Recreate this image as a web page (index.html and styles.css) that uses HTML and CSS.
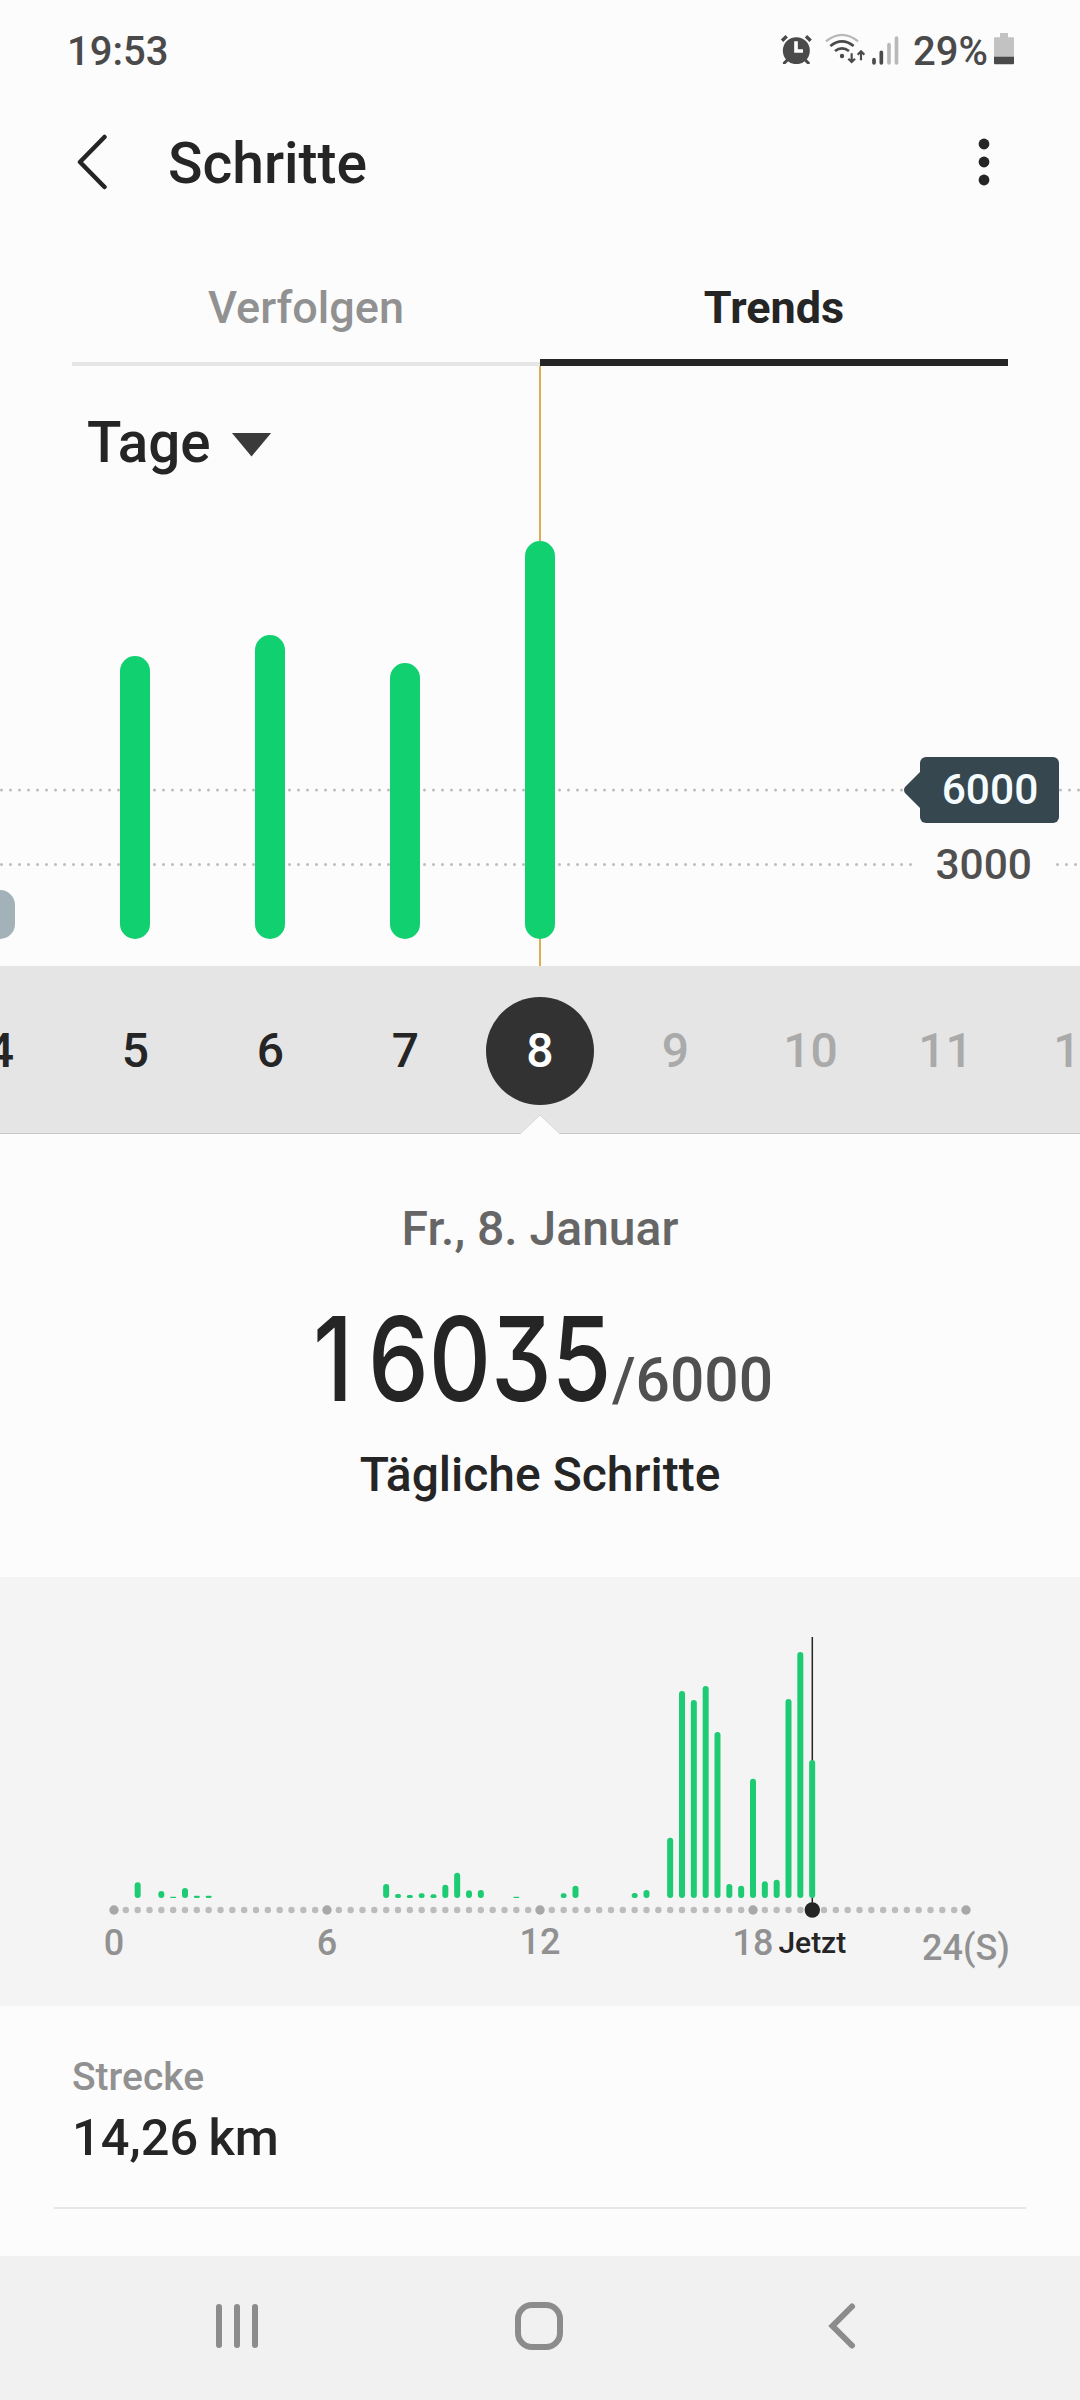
FILE: index.html
```html
<!DOCTYPE html>
<html lang="de">
<head>
    <meta charset="UTF-8">
    <meta name="viewport" content="width=device-width, initial-scale=1.0">
    <title>Schritte</title>
    <link rel="stylesheet" href="styles.css">
</head>
<body>
    <div class="status-bar">
        <span class="time">19:53</span>
        <div class="status-icons">
            <svg class="icon-alarm" viewBox="0 0 99 92">
                <circle cx="49" cy="50" r="40.500"/>
                <path d="M6 20 20 7M92 20 78 7" stroke-width="10.500"/>
                <path d="M13 87 24 76M85 87 74 76" stroke-width="9" stroke-linecap="round"/>
                <path class="hands" d="M48 22V51H69" stroke-width="11"/>
            </svg>
            <svg class="icon-wifi" viewBox="0 0 122 94">
                <path class="faint" d="M3 25Q51 -14 99 25" stroke-width="7"/>
                <path d="M16 39Q51 11 86 39" stroke-width="8"/>
                <path d="M30 54Q51 38 72 54" stroke-width="8"/>
                <circle cx="51" cy="69" r="6.500"/>
                <path d="M80 61V87M70 77 80 87 90 77M108 82V55M98 65 108 55 118 65" stroke-width="6.500"/>
            </svg>
            <svg class="icon-signal" viewBox="0 0 80 87">
                <path d="M6 71V81M28 49V81" stroke-width="11" stroke-linecap="round"/>
                <path class="faint" d="M51 26V81M73.500 6V81" stroke-width="11" stroke-linecap="round"/>
            </svg>
            <span class="percent">29%</span>
            <svg class="icon-battery" viewBox="0 0 60 94">
                <path class="shell" d="M18 0H42V13H57Q60 13 60 16V72H0V16Q0 13 3 13H18Z"/>
                <path d="M0 71H60V91Q60 94 57 94H3Q0 94 0 91Z"/>
            </svg>
        </div>
    </div>

    <header class="app-bar">
        <svg class="back" viewBox="0 0 32 56"><path d="M28.500 3 4 28 28.500 53"/></svg>
        <h1>Schritte</h1>
        <svg class="more" viewBox="0 0 12 48">
            <circle cx="6" cy="6" r="5.400"/>
            <circle cx="6" cy="24" r="5.400"/>
            <circle cx="6" cy="42" r="5.400"/>
        </svg>
    </header>

    <nav class="tabs">
        <div class="tab">Verfolgen</div>
        <div class="tab active">Trends</div>
    </nav>

    <section class="trend">
        <svg class="grid" viewBox="0 0 1080 600">
            <path d="M1.500 424H904M1060.500 424H1080M1.500 498.500H911M1057.500 498.500H1080"/>
        </svg>
        <div class="marker"></div>
        <div class="period">Tage <span class="caret"></span></div>
        <div class="bars">
            <div class="day"><div class="bar missed" style="height: 49px"></div></div>
            <div class="day"><div class="bar" style="height: 283px"></div></div>
            <div class="day"><div class="bar" style="height: 304px"></div></div>
            <div class="day"><div class="bar" style="height: 276px"></div></div>
            <div class="day"><div class="bar" style="height: 398px"></div></div>
        </div>
        <div class="goal">
            <svg viewBox="0 0 18 40"><path d="M18 1 2 17Q0 20 2 23L18 39Z"/></svg>
            <span>6000</span>
        </div>
        <div class="scale">3000</div>
    </section>

    <div class="dates">
        <div class="day">4</div>
        <div class="day">5</div>
        <div class="day">6</div>
        <div class="day">7</div>
        <div class="day selected"><span>8</span></div>
        <div class="day future">9</div>
        <div class="day future">10</div>
        <div class="day future">11</div>
        <div class="day future">12</div>
        <svg class="notch" viewBox="0 0 40 20"><path d="M0 20 20 1 40 20"/></svg>
    </div>

    <section class="summary">
        <div class="date">Fr., 8. Januar</div>
        <div class="count"><span class="steps">16035</span><span class="target">/6000</span></div>
        <div class="caption">Tägliche Schritte</div>
    </section>

    <section class="hourly">
        <svg id="hours" viewBox="0 0 1080 429">
            <line class="now-line" x1="812.300" y1="60" x2="812.300" y2="333"/>
            <g id="hourBars"></g>
            <g id="hourDots"></g>
            <circle class="now-dot" cx="812.300" cy="333" r="7.700"/>
            <text x="114" y="377.500">0</text>
            <text x="327" y="377.500">6</text>
            <text x="540" y="377">12</text>
            <text x="753" y="377.500">18</text>
            <text class="now" x="812.300" y="376">Jetzt</text>
            <text x="966" y="383">24(S)</text>
        </svg>
    </section>

    <section class="distance">
        <div class="label">Strecke</div>
        <div class="value">14,26&#8201;km</div>
    </section>

    <footer class="nav-bar">
        <svg class="nav-icon" viewBox="0 0 60 60"><path d="M12 11V49M30 11V49M48 11V49"/></svg>
        <svg class="nav-icon" viewBox="0 0 60 60"><rect x="9" y="9" width="42" height="42" rx="14"/></svg>
        <svg class="nav-icon" viewBox="0 0 60 60"><path d="M41 10.500 21.500 30 41 49.500"/></svg>
    </footer>

    <script>
        // one slot is 20 minutes: [slot, bar height]
        const activity = [
            [2, 15.7], [4, 7], [5, 1.3], [6, 10], [7, 2.3], [8, 2.3],
            [23, 14], [24, 4], [25, 3], [26, 4.7], [27, 3.7], [28, 13.3],
            [29, 25.3], [30, 7.7], [31, 8], [34, 1.3], [38, 4.7], [39, 12.3],
            [44, 5], [45, 8], [47, 60.3], [48, 207], [49, 198], [50, 212],
            [51, 166], [52, 14], [53, 12.3], [54, 119.3], [55, 16.7],
            [56, 18.3], [57, 199], [58, 246], [59, 138]
        ];
        const slotX = slot => 114 + slot * 213 / 18;

        document.getElementById('hourBars').innerHTML = activity.map(([slot, h]) =>
            `<rect x="${slotX(slot) - 3}" y="${321 - h}" width="6" height="${h}" rx="${Math.min(3, h / 2)}"/>`
        ).join('');

        // Axis dots, a bigger one every 6 hours
        let dots = '';
        for (let i = 0; i <= 72; i++) {
            const major = i % 18 === 0;
            dots += `<circle class="${major ? 'major' : ''}" cx="${slotX(i)}" cy="333" r="${major ? 4.7 : 3.2}"/>`;
        }
        document.getElementById('hourDots').innerHTML = dots;
    </script>
</body>
</html>
```
FILE: styles.css
```css
:root {
    --bg: #fcfcfc;
    --text: #252525;
    --muted: #919191;
    --green: #10d070;
    --dark: #37474f;
}

* {
    box-sizing: border-box;
}

body {
    margin: 0;
    width: 1080px;
    height: 2400px;
    background: var(--bg);
    color: var(--text);
    font-family: Roboto, sans-serif;
    font-weight: 500;
    overflow: hidden;
}

svg {
    display: block;
    flex: none;
}

/* Status bar */
.status-bar {
    display: flex;
    justify-content: space-between;
    height: 100px;
    padding: 0 66px 0 67px;
    font-size: 40px;
    line-height: 103px;
    color: #4a4a4a;
}

.status-icons {
    display: flex;
}

.status-icons svg {
    fill: #4a4a4a;
    stroke: none;
}

.status-icons path[stroke-width] {
    fill: none;
    stroke: #4a4a4a;
}

.status-icons path.hands {
    stroke: var(--bg);
}

.status-icons path.faint {
    stroke: #b9b9b9;
}

.status-icons .shell {
    fill: #c2c2c2;
}

.icon-alarm {
    width: 33px;
    height: 30.67px;
    margin: 33.500px 12px 0 0;
}

.icon-wifi {
    width: 40.67px;
    height: 31.33px;
    margin: 33px 7px 0 0;
}

.icon-signal {
    width: 26.67px;
    height: 29px;
    margin: 35.500px 14px 0 0;
}

.percent {
    margin-right: 6px;
}

.icon-battery {
    width: 20px;
    height: 31.33px;
    margin-top: 33.300px;
}

/* App bar */
.app-bar {
    display: flex;
    align-items: center;
    height: 128px;
    padding: 0 90px 0 76px;
}

.app-bar h1 {
    flex: 1;
    margin: 0 0 0 60px;
    font-size: 57px;
    font-weight: 500;
    line-height: 130px;
}

.back {
    width: 32px;
    height: 56px;
    margin-bottom: 4px;
    fill: none;
    stroke: var(--text);
    stroke-width: 4.500;
    stroke-linecap: round;
    stroke-linejoin: round;
}

.more {
    width: 12px;
    height: 48px;
    margin-bottom: 4px;
    fill: var(--text);
}

/* Tabs */
.tabs {
    display: flex;
    height: 138px;
    margin: 0 72px;
}

.tab {
    flex: 1;
    padding-top: 40px;
    border-bottom: 4px solid #e6e6e6;
    font-size: 45px;
    line-height: 80px;
    text-align: center;
    color: var(--muted);
}

.tab.active {
    border-bottom: 7px solid var(--text);
    font-weight: 700;
    color: var(--text);
}

/* Daily chart */
.trend {
    position: relative;
    display: flex;
    flex-direction: column;
    height: 600px;
    padding: 39px 0 27px;
}

.grid {
    position: absolute;
    inset: 0;
    fill: none;
    stroke: #bdbdbd;
    stroke-width: 3;
    stroke-linecap: round;
    stroke-dasharray: 0 9;
}

.marker {
    position: absolute;
    top: 0;
    bottom: 0;
    left: 539px;
    width: 2px;
    background: #dcad52;
}

.period {
    display: flex;
    align-items: center;
    gap: 21px;
    padding-left: 87px;
    font-size: 56.500px;
    line-height: 76px;
}

.caret {
    width: 40px;
    height: 24px;
    margin-top: 3px;
    background: #3a3a3a;
    clip-path: polygon(0 0, 100% 0, 50% 100%);
}

.bars {
    position: relative;
    flex: 1;
    display: flex;
    align-items: flex-end;
    margin-left: -67.500px;
}

.day {
    flex: none;
    width: 135px;
}

.bar {
    width: 30px;
    margin: 0 auto;
    border-radius: 15px;
    background: var(--green);
}

.bar.missed {
    background: #a3b1b8;
}

.goal {
    position: absolute;
    top: 391px;
    right: 21px;
    display: flex;
    align-items: center;
    font-size: 42.500px;
    line-height: 66px;
    color: #f5fcff;
}

.goal svg {
    width: 18px;
    height: 40px;
    margin-right: -1px;
    fill: var(--dark);
}

.goal span {
    width: 139px;
    padding-left: 1px;
    border-radius: 6px;
    background: var(--dark);
    text-align: center;
}

.scale {
    position: absolute;
    top: 465px;
    right: 48px;
    font-size: 42.500px;
    line-height: 68px;
    color: #505050;
}

/* Date strip */
.dates {
    position: relative;
    display: flex;
    align-items: flex-start;
    height: 168px;
    padding-top: 31px;
    background: #e5e5e5;
    border-bottom: 1px solid #c8c8c8;
    font-size: 48px;
    line-height: 108px;
    text-align: center;
    overflow-x: clip;
}

.dates .day {
    padding-left: 1px;
}

.dates .day:first-child {
    margin-left: -67.500px;
}

.dates .future {
    color: #aaa;
}

.dates .selected {
    padding-left: 0;
}

.selected span {
    display: block;
    width: 108px;
    margin: 0 auto;
    border-radius: 50%;
    background: #323232;
    color: #fff;
}

.notch {
    position: absolute;
    left: 520px;
    bottom: -1px;
    width: 40px;
    height: 20px;
    fill: var(--bg);
    stroke: #d8d8d8;
    stroke-width: 1;
}

/* Summary */
.summary {
    display: flex;
    flex-direction: column;
    align-items: center;
    height: 443px;
    padding-top: 59px;
}

.date {
    font-size: 48px;
    line-height: 72px;
    color: #666;
}

.count {
    display: flex;
    align-items: baseline;
    height: 150px;
    margin-top: 19px;
    padding-left: 6px;
    line-height: 150px;
}

.steps {
    width: 299px;
    font-family: Inter, Roboto, sans-serif;
    font-size: 117px;
    font-weight: 450;
    font-feature-settings: "cv09";
    transform: scaleX(0.825);
    transform-origin: 0 50%;
}

/* the leading 1 is narrow, keep it a full digit apart */
.steps::first-letter {
    letter-spacing: 18px;
}

.target {
    font-size: 60.500px;
    color: #505050;
}

.caption {
    margin-top: 5px;
    font-size: 48px;
    line-height: 72px;
}

/* Hourly chart */
.hourly {
    height: 429px;
    background: #f4f4f4;
}

.hourly svg {
    width: 1080px;
    height: 429px;
}

.hourly text {
    font-size: 36px;
    text-anchor: middle;
    fill: var(--muted);
}

.hourly .now {
    font-size: 30px;
    fill: var(--text);
}

.now-line {
    stroke: var(--text);
    stroke-width: 1.500;
}

.now-dot {
    fill: var(--text);
}

#hourBars {
    fill: #1dcb72;
}

#hourDots {
    fill: #bcbcbc;
}

#hourDots .major {
    fill: #a8a8a8;
}

/* Distance */
.distance {
    height: 203px;
    margin: 0 54px;
    padding: 41px 18px 0;
    border-bottom: 2px solid #e6e6e6;
}

.label {
    font-size: 39px;
    line-height: 60px;
    color: var(--muted);
}

.value {
    font-size: 50.500px;
    line-height: 61px;
}

/* System navigation */
.nav-bar {
    display: flex;
    gap: 242px;
    height: 144px;
    margin-top: 47px;
    padding: 40px 0 0 207px;
    background: #f1f1f1;
}

.nav-icon {
    width: 60px;
    height: 60px;
    fill: none;
    stroke: #8c8c8c;
    stroke-width: 6;
    stroke-linecap: round;
}
```
